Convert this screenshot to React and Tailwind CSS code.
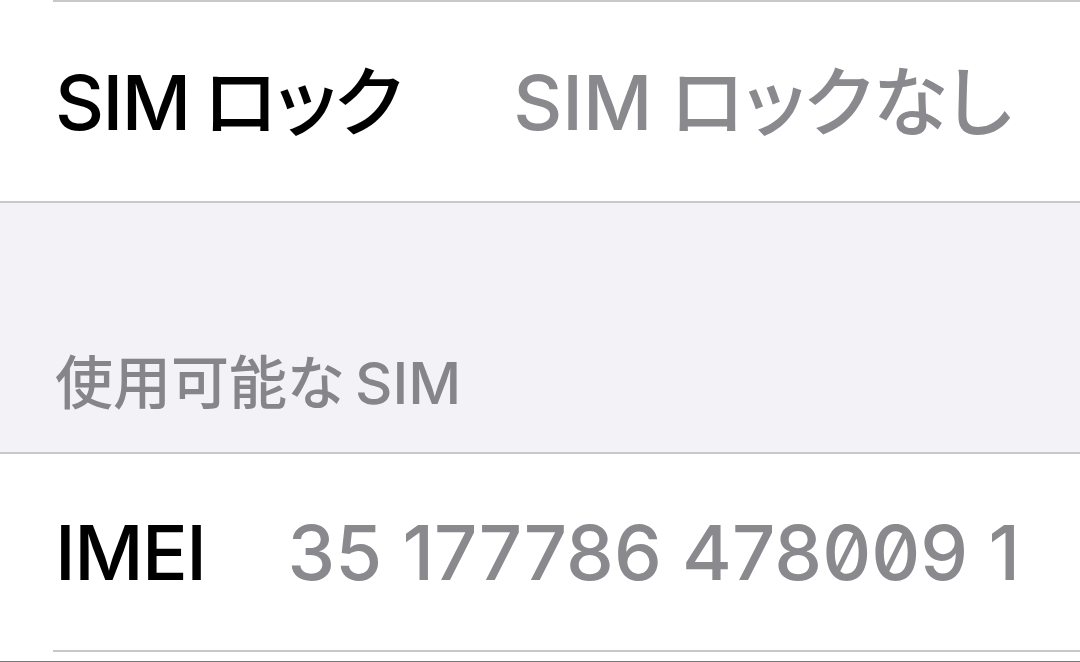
const font = { fontFamily: '"Inter", "Noto Sans CJK JP", sans-serif' };

const Row = ({ label, value, gap, className }) => (
  <div className={`flex items-center bg-white pl-[55px] whitespace-nowrap ${className}`}>
    <span className="text-[76px] leading-none font-medium text-black tracking-[-0.02em] [font-feature-settings:'palt']">{label}</span>
    <span className={`text-[76px] leading-none font-medium text-[#8a8a8e] slashed-zero tracking-normal [font-feature-settings:'palt'] ${gap}`}>{value}</span>
  </div>
);

export default function App() {
  return (
    <div className="w-[1080px] h-[662px] overflow-hidden bg-white flex flex-col" style={font}>
      <div className="h-[2px] shrink-0 bg-white pl-[53px]">
        <div className="h-[2px] bg-[#c8c7cc]" />
      </div>
      <Row
        label={<><span className="mr-[14px]">SIM</span>ロック</>}
        value={<><span className="mr-[18px]">SIM</span>ロックなし</>}
        gap="ml-[112px]"
        className="h-[199px] shrink-0"
      />
      <div className="h-[2px] shrink-0 bg-[#c8c7cc]" />
      <div className="h-[249px] shrink-0 bg-[#f2f2f7] flex items-end pl-[55px] pb-[40px] whitespace-nowrap">
        <span className="text-[58px] leading-none font-medium text-[#85858a]">
          使用可能な<span className="ml-[10px]">SIM</span>
        </span>
      </div>
      <div className="h-[2px] shrink-0 bg-[#c8c7cc]" />
      <Row label="IMEI" value="35 177786 478009 1" gap="ml-[82px]" className="h-[196px] shrink-0" />
      <div className="h-[2px] shrink-0 bg-white pl-[53px]">
        <div className="h-[2px] bg-[#c8c7cc]" />
      </div>
      <div className="h-[9px] shrink-0 bg-white" />
      <div className="h-[2px] shrink-0 bg-[#7a7a7a]" />
    </div>
  );
}
